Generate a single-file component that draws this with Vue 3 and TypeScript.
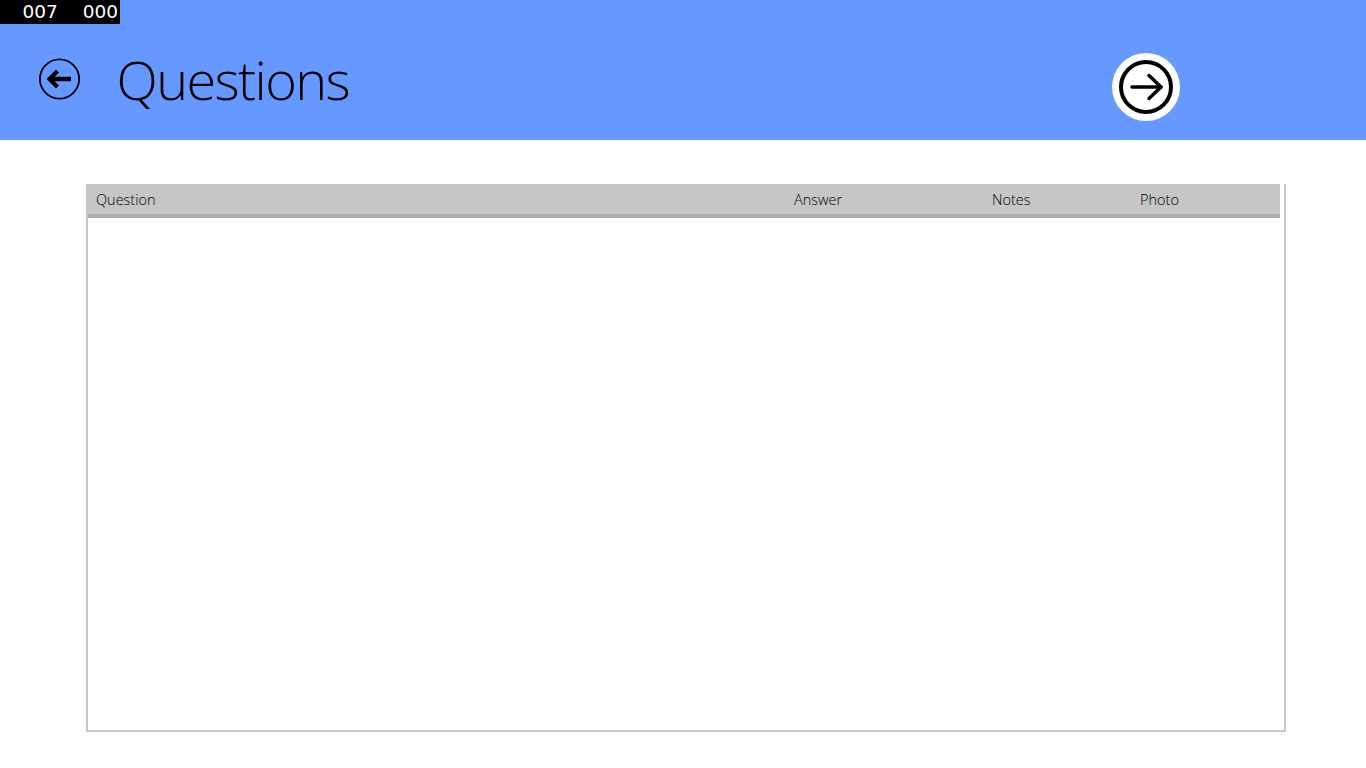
<template>
  <div class="page">
    <header class="top-bar">
      <div class="counters">
        <span class="counter">007</span>
        <span class="counter">000</span>
      </div>
      <button class="back-btn" aria-label="Back">
        <svg width="42" height="42" viewBox="0 0 42 42" fill="none">
          <circle cx="21.5" cy="21" r="19.6" stroke="#000" stroke-width="1.8" />
          <path d="M12 21H33" stroke="#000" stroke-width="4.5" />
          <path d="M19.5 13L11.5 21L19.5 29" stroke="#000" stroke-width="4.2" />
        </svg>
      </button>
      <h1 class="title">Questions</h1>
      <button class="next-btn" aria-label="Next">
        <svg width="56" height="56" viewBox="0 0 56 56" fill="none">
          <circle cx="28" cy="28" r="25" stroke="#000" stroke-width="4" />
          <path d="M14 28H43" stroke="#000" stroke-width="3.5" stroke-linecap="round" />
          <path d="M31 16.5L43 28L31 39.5" stroke="#000" stroke-width="3.5" stroke-linecap="round" stroke-linejoin="round" />
        </svg>
      </button>
    </header>
    <main class="content">
      <section class="grid-box">
        <div class="grid-head">
          <span v-for="col in columns" :key="col.label" :style="{ width: col.width + 'px' }">{{ col.label }}</span>
        </div>
      </section>
    </main>
  </div>
</template>

<script setup lang="ts">
const columns = [
  { label: "Question", width: 698 },
  { label: "Answer", width: 198 },
  { label: "Notes", width: 148 },
  { label: "Photo", width: 100 },
];
</script>

<style>
html,
body {
  margin: 0;
  background: #fff;
}
</style>

<style scoped>
.page {
  height: 768px;
  overflow: hidden;
  font-family: "Open Sans", "Noto Sans", sans-serif;
  color: #000;
}

.top-bar {
  position: relative;
  height: 140px;
  background: #6699ff;
  display: flex;
  align-items: center;
  box-sizing: border-box;
  padding: 18px 186px 0 38px;
}

.counters {
  position: absolute;
  top: 0;
  left: 0;
  width: 120px;
  height: 24px;
  background: #000;
  display: flex;
  justify-content: flex-end;
  gap: 25px;
  padding-right: 2px;
  box-sizing: border-box;
}

.counter {
  color: #fff;
  font: 18.5px/23px "DejaVu Sans", sans-serif;
}

button {
  border: 0;
  padding: 0;
  background: none;
  display: flex;
}

.title {
  flex: 1;
  margin: 0 0 0 36.5px;
  font-weight: 300;
  font-size: 54px;
  line-height: 74px;
  letter-spacing: -1.6px;
}

.next-btn {
  width: 68px;
  height: 68px;
  margin-top: 16px;
  border-radius: 50%;
  background: #fff;
  align-items: center;
  justify-content: center;
}

.content {
  padding: 44px 80px 0 86px;
}

.grid-box {
  width: 1200px;
  height: 548px;
  box-sizing: border-box;
  border: 2px solid #c8c8c8;
  border-top: 0;
}

.grid-head {
  height: 34px;
  box-sizing: border-box;
  background: #c6c6c6;
  border-bottom: 4px solid #aeaeae;
  display: flex;
  padding-left: 8px;
  margin-right: 4px;
  font-size: 14.5px;
  font-weight: 300;
  line-height: 31px;
}
</style>
